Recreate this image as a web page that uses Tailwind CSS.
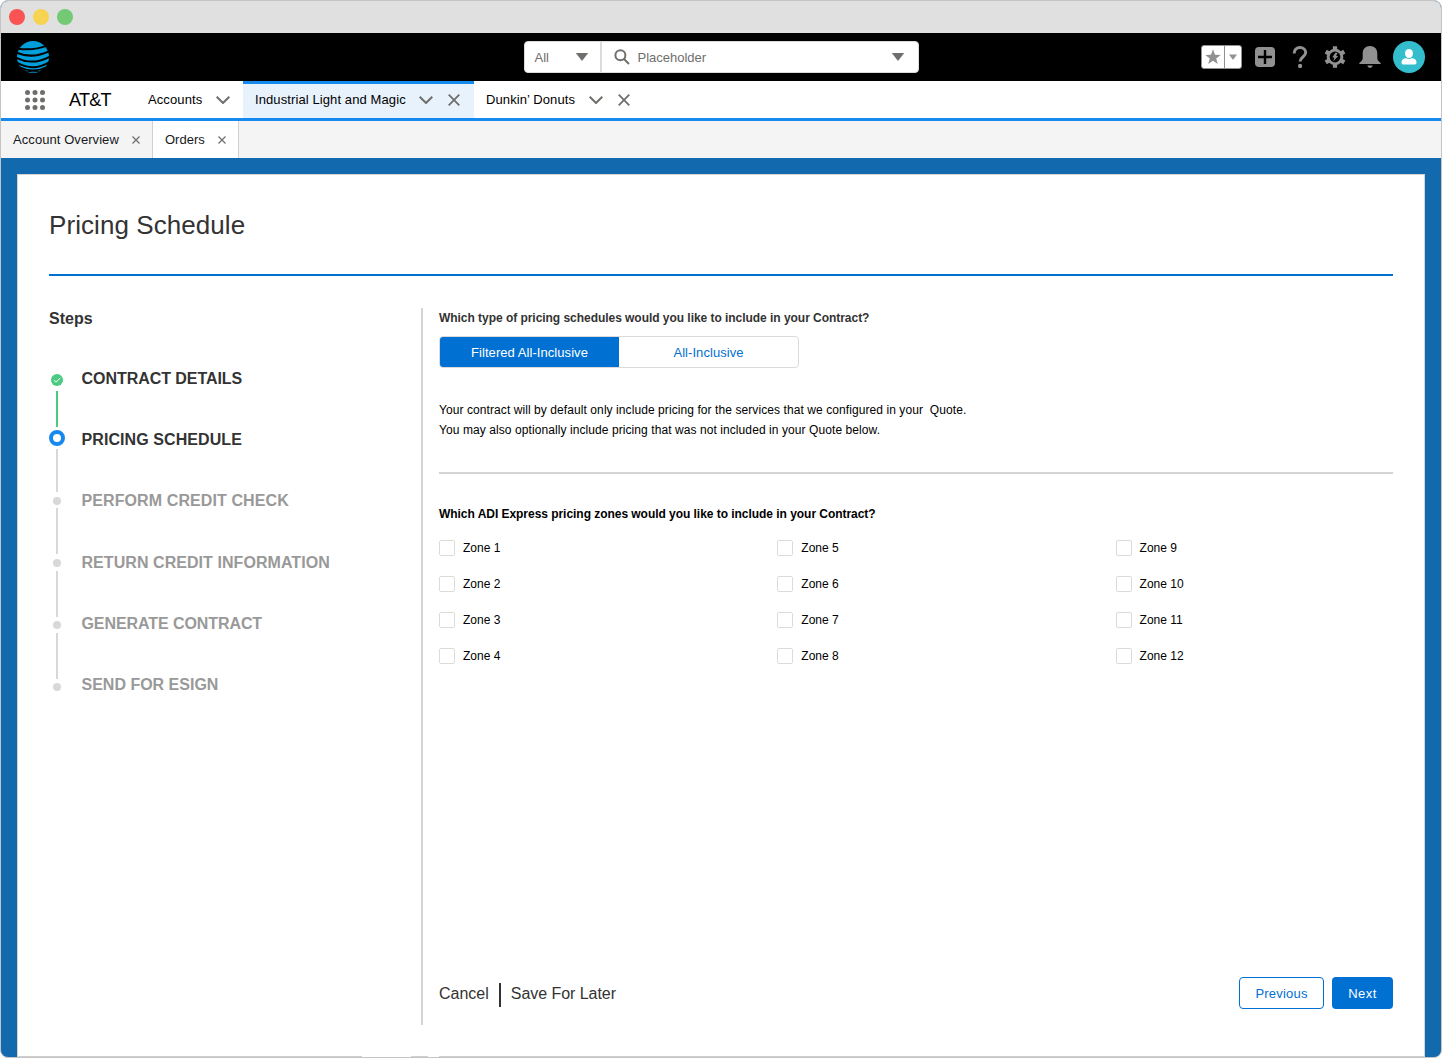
<!DOCTYPE html>
<html lang="en">
<head>
    <meta charset="UTF-8">
    <meta name="viewport" content="width=device-width, initial-scale=1.0">
    <title>Pricing Schedule</title>
    <script src="https://cdn.jsdelivr.net/npm/@tailwindcss/browser@4"></script>
    <style>
        body {
            font-family: 'Liberation Sans', Arial, sans-serif;
        }
    </style>
</head>
<body class="bg-white">
    <div class="flex h-[1058px] w-[1442px] flex-col overflow-hidden rounded-lg border border-[#c4c4c4] bg-[#1269ae] text-[13px] text-[#16181c]">
        <!-- Window title bar -->
        <div class="flex h-8 shrink-0 items-center gap-2 bg-[#e0e0e0] pl-2">
            <span class="size-4 rounded-full bg-[#f95353]"></span>
            <span class="size-4 rounded-full bg-[#f6d351]"></span>
            <span class="size-4 rounded-full bg-[#73c974]"></span>
        </div>

        <!-- Global header -->
        <header class="grid h-12 shrink-0 grid-cols-[1fr_395px_1fr] items-center bg-black px-4">
            <svg class="size-8" viewBox="0 0 96 96">
                <circle cx="48" cy="48" r="48" fill="#009fdb"/>
                <g fill="none" stroke="#000" stroke-width="6">
                    <path d="M4 23Q48 30 92 13"/>
                    <path d="M-4 34Q44 56 100 29"/>
                    <path d="M-4 49Q46 76 100 46"/>
                    <path d="M-2 64Q48 94 98 63"/>
                    <path d="M4 77Q48 99 92 77" stroke-width="5"/>
                    <path d="M14 87Q48 98 82 87" stroke-width="3"/>
                </g>
            </svg>
            <div class="flex h-8 items-center rounded border border-[#dddbda] bg-white text-[#706e6b]">
                <div class="flex h-full w-[77px] items-center justify-between border-r-2 border-[#dddbda] pr-3 pl-[10px]">
                    <span class="pt-px">All</span>
                    <svg class="h-2 w-3" viewBox="0 0 12 8" fill="currentColor"><path d="M.5 0h11q.5 0 .3.5L6.4 7.6q-.4.5-.8 0L.2.5Q0 0 .5 0z"/></svg>
                </div>
                <svg class="ml-3 size-4" viewBox="0 0 16 16" fill="none" stroke="currentColor" stroke-width="2"><circle cx="6.400" cy="6.300" r="5"/><path d="M10 10l5 5"/></svg>
                <span class="ml-2 flex-1 pt-px">Placeholder</span>
                <svg class="mr-[14px] h-2 w-3" viewBox="0 0 12 8" fill="currentColor"><path d="M.5 0h11q.5 0 .3.5L6.4 7.6q-.4.5-.8 0L.2.5Q0 0 .5 0z"/></svg>
            </div>
            <div class="flex items-center justify-end text-[#919191]">
                <div class="mr-[13px] flex h-6 w-[41px] items-center rounded-[3px] border border-[#919191] bg-white">
                    <svg class="ml-[3px] size-4" viewBox="0 0 16 16" fill="currentColor"><path d="M8 .3l2 5.400 5.700.2-4.500 3.500 1.600 5.600L8 11.800l-4.800 3.200 1.600-5.600L.3 5.900 6 5.700z"/></svg>
                    <span class="ml-[3px] h-full w-px bg-[#919191]"></span>
                    <svg class="ml-1 h-[6px] w-2" viewBox="0 0 8 6" fill="currentColor"><path d="M0 .4h8L4.500 5.300q-.5.6-1 0z"/></svg>
                </div>
                <svg class="mr-[17px] size-5" viewBox="0 0 20 20"><rect width="20" height="20" rx="4" fill="currentColor"/><path d="M10 3v14M3 10h14" stroke="#000" stroke-width="2.400"/></svg>
                <svg class="mr-4 h-[22px] w-4" viewBox="0 0 16 22" fill="none"><path d="M2.200 7.500C2 3.800 4.700 1.600 8 1.600s5.700 2.100 5.700 5c0 4.700-5.600 4.200-5.600 8.900" stroke="currentColor" stroke-width="3"/><rect x="6.200" y="18" width="3.800" height="4" rx="1.200" fill="currentColor"/></svg>
                <svg class="mr-[13px] size-[22px]" viewBox="0 0 22 22">
                    <g stroke="currentColor" stroke-width="4.200">
                        <path d="M11 .2v21.600M1.700 5.600l18.600 10.800M20.300 5.600L1.700 16.400"/>
                    </g>
                    <circle cx="11" cy="11" r="8.300" fill="currentColor"/>
                    <circle cx="11" cy="11" r="5.400" fill="#000"/>
                    <path d="M11.300 6.800h2.200l-1.300 3.200h2l-4.900 5.200 1.100-3.800H8.300z" fill="currentColor"/>
                </svg>
                <svg class="mr-3 size-[22px]" viewBox="0 0 22 22" fill="currentColor"><path d="M11 0C6.600 0 3.700 3 3.700 7.300v4.200c0 2.200-.6 3.300-2.200 4.400C-.2 17 .1 18 .8 18h20.400c.7 0 1-1-.7-2.100-1.600-1.100-2.200-2.200-2.200-4.400V7.300C18.300 3 15.400 0 11 0zM8.200 19.600h5.600Q13 22 11 22t-2.800-2.400z"/></svg>
                <span class="flex size-8 items-center justify-center rounded-full bg-[#34becd]">
                    <svg class="size-4" viewBox="0 0 16 16" fill="#fff"><ellipse cx="8" cy="4.500" rx="4" ry="4.500"/><path d="M1.800 10.200q1.700-1 3.600-.9 2.600 1.400 5.200 0 1.900-.1 3.600.9 1.300 1 1.300 3.500 0 1.800-1.700 1.800H2.200Q.5 15.500.5 13.700q0-2.500 1.300-3.500z"/></svg>
                </span>
            </div>
        </header>

        <!-- App navigation -->
        <nav class="flex h-10 shrink-0 border-b-3 border-[#1589ee] bg-white text-black">
            <div class="flex w-[242px] items-center">
                <svg class="ml-6 size-5" viewBox="0 0 20 20" fill="#706e6b"><circle cx="2.500" cy="2.500" r="2.500"/><circle cx="10" cy="2.500" r="2.500"/><circle cx="17.500" cy="2.500" r="2.500"/><circle cx="2.500" cy="10" r="2.500"/><circle cx="10" cy="10" r="2.500"/><circle cx="17.500" cy="10" r="2.500"/><circle cx="2.500" cy="17.500" r="2.500"/><circle cx="10" cy="17.500" r="2.500"/><circle cx="17.500" cy="17.500" r="2.500"/></svg>
                <span class="ml-6 w-[79px] pt-px text-[18px] tracking-[-0.700px]">AT&amp;T</span>
                <span class="pt-px tracking-[0.100px]">Accounts</span>
                <svg class="mr-[13px] ml-auto h-2 w-[14px]" viewBox="0 0 14 8" fill="none" stroke="#706e6b" stroke-width="2"><path d="M.7.7L7 7 13.300.7"/></svg>
            </div>
            <div class="flex w-[231px] items-center border-t-3 border-[#1589ee] bg-[#e8f2fd] pb-[3px] pl-3">
                <span class="pt-px tracking-[0.100px]">Industrial Light and Magic</span>
                <svg class="mr-[15px] ml-auto h-2 w-[14px]" viewBox="0 0 14 8" fill="none" stroke="#706e6b" stroke-width="2"><path d="M.7.7L7 7 13.300.7"/></svg>
                <svg class="mr-[14px] size-3" viewBox="0 0 12 12" stroke="#706e6b" stroke-width="1.800"><path d="M.7.7l10.600 10.600M11.300.7L.7 11.300"/></svg>
            </div>
            <div class="flex w-[170px] items-center pl-3">
                <span class="pt-px tracking-[0.100px]">Dunkin’ Donuts</span>
                <svg class="mr-[15px] ml-auto h-2 w-[14px]" viewBox="0 0 14 8" fill="none" stroke="#706e6b" stroke-width="2"><path d="M.7.7L7 7 13.300.7"/></svg>
                <svg class="mr-[14px] size-3" viewBox="0 0 12 12" stroke="#706e6b" stroke-width="1.800"><path d="M.7.7l10.600 10.600M11.300.7L.7 11.300"/></svg>
            </div>
        </nav>

        <!-- Sub tabs -->
        <div class="flex h-[37px] shrink-0 bg-[#f4f4f4]">
            <div class="flex w-[152px] items-center justify-between border-r border-[#d0d0d0] px-3">
                <span class="pt-px tracking-[0.070px]">Account Overview</span>
                <svg class="size-2" viewBox="0 0 8 8" stroke="#706e6b" stroke-width="1.200"><path d="M.5.5l7 7M7.500.5l-7 7"/></svg>
            </div>
            <div class="flex w-[86px] items-center justify-between border-r border-[#d0d0d0] bg-white px-3">
                <span class="pt-px">Orders</span>
                <svg class="size-2" viewBox="0 0 8 8" stroke="#706e6b" stroke-width="1.200"><path d="M.5.5l7 7M7.500.5l-7 7"/></svg>
            </div>
        </div>

        <!-- Page card -->
        <main class="mx-4 mt-4 flex flex-1 flex-col border border-b-0 border-[#d4d4d4] bg-white px-[31px]">
            <div class="h-[101px] border-b-2 border-[#0070d2] pt-[34px]">
                <h1 class="text-[26px] leading-8 tracking-[0.070px] text-[#333]">Pricing Schedule</h1>
            </div>
            <div class="mt-8 flex h-[717px]">
                <aside class="w-[374px] shrink-0 border-r-2 border-[#d4d4d4] font-bold text-[#333]">
                    <h2 class="mb-[19px] pt-px text-[16px] leading-5">Steps</h2>
                    <div class="flex">
                        <div class="flex w-4 flex-col items-center pt-[26px]">
                            <svg class="size-3" viewBox="0 0 12 12"><circle cx="6" cy="6" r="6" fill="#4bca81"/><path d="M2.800 6l2.200 2.200L9.300 4" fill="none" stroke="#fff"/></svg>
                            <span class="mt-[5px] h-9 w-[2px] bg-[#4bca81]"></span>
                            <span class="mt-[3px] size-4 rounded-full border-4 border-[#1589ee]"></span>
                            <span class="mt-[3px] h-[43px] w-[2px] bg-[#d8d8d8]"></span>
                            <span class="mt-[4.500px] size-2 rounded-full bg-[#d8d8d8]"></span>
                            <span class="mt-[3.500px] h-[46px] w-[2px] bg-[#d8d8d8]"></span>
                            <span class="mt-[4.500px] size-2 rounded-full bg-[#d8d8d8]"></span>
                            <span class="mt-[4px] h-[46px] w-[2px] bg-[#d8d8d8]"></span>
                            <span class="mt-[4px] size-2 rounded-full bg-[#d8d8d8]"></span>
                            <span class="mt-[4px] h-[46px] w-[2px] bg-[#d8d8d8]"></span>
                            <span class="mt-[4.500px] size-2 rounded-full bg-[#d8d8d8]"></span>
                        </div>
                        <ol class="ml-[16.500px] text-[16px] leading-[61.200px] whitespace-nowrap">
                            <li class="tracking-[-0.050px]">CONTRACT DETAILS</li>
                            <li class="tracking-[0.080px]">PRICING SCHEDULE</li>
                            <li class="tracking-[0.100px] text-[#999]">PERFORM CREDIT CHECK</li>
                            <li class="tracking-[0.060px] text-[#999]">RETURN CREDIT INFORMATION</li>
                            <li class="tracking-[-0.080px] text-[#999]">GENERATE CONTRACT</li>
                            <li class="text-[#999]">SEND FOR ESIGN</li>
                        </ol>
                    </div>
                </aside>

                <section class="ml-4 flex flex-1 flex-col text-[12px] leading-5 text-black">
                    <h3 class="font-bold tracking-[-0.040px] text-[#333]">Which type of pricing schedules would you like to include in your Contract?</h3>
                    <div class="mt-2 flex h-8 w-[360px] overflow-hidden rounded border border-[#dddbda] text-[13px] text-[#0070d2]">
                        <button class="w-[179px] bg-[#0070d2] pt-px tracking-[0.060px] text-white">Filtered All-Inclusive</button>
                        <button class="flex-1 pt-px tracking-[0.060px]">All-Inclusive</button>
                    </div>
                    <div class="mt-8 border-b-2 border-[#d4d4d4] pb-8 tracking-[0.080px]">
                        <p>Your contract will by default only include pricing for the services that we configured in your &nbsp;Quote.</p>
                        <p>You may also optionally include pricing that was not included in your Quote below.</p>
                    </div>
                    <h3 class="mt-[30px] font-bold tracking-[-0.040px]">Which ADI Express pricing zones would you like to include in your Contract?</h3>
                    <div class="mt-[14px] grid grid-flow-col grid-cols-[338.300px_338.300px_1fr] grid-rows-4 gap-y-4">
                        <label class="flex items-center gap-2"><span class="size-4 rounded-[2px] border border-[#dddbda]"></span>Zone 1</label>
                        <label class="flex items-center gap-2"><span class="size-4 rounded-[2px] border border-[#dddbda]"></span>Zone 2</label>
                        <label class="flex items-center gap-2"><span class="size-4 rounded-[2px] border border-[#dddbda]"></span>Zone 3</label>
                        <label class="flex items-center gap-2"><span class="size-4 rounded-[2px] border border-[#dddbda]"></span>Zone 4</label>
                        <label class="flex items-center gap-2"><span class="size-4 rounded-[2px] border border-[#dddbda]"></span>Zone 5</label>
                        <label class="flex items-center gap-2"><span class="size-4 rounded-[2px] border border-[#dddbda]"></span>Zone 6</label>
                        <label class="flex items-center gap-2"><span class="size-4 rounded-[2px] border border-[#dddbda]"></span>Zone 7</label>
                        <label class="flex items-center gap-2"><span class="size-4 rounded-[2px] border border-[#dddbda]"></span>Zone 8</label>
                        <label class="flex items-center gap-2"><span class="size-4 rounded-[2px] border border-[#dddbda]"></span>Zone 9</label>
                        <label class="flex items-center gap-2"><span class="size-4 rounded-[2px] border border-[#dddbda]"></span>Zone 10</label>
                        <label class="flex items-center gap-2"><span class="size-4 rounded-[2px] border border-[#dddbda]"></span>Zone 11</label>
                        <label class="flex items-center gap-2"><span class="size-4 rounded-[2px] border border-[#dddbda]"></span>Zone 12</label>
                    </div>
                    <div class="mt-auto mb-4 flex h-8 items-center text-[16px] text-[#333]">
                        <a class="pt-px">Cancel</a>
                        <span class="mt-1 mr-[10px] ml-[10px] h-6 w-[2px] bg-[#333]"></span>
                        <a class="pt-px tracking-[-0.050px]">Save For Later</a>
                        <div class="ml-auto flex gap-2 text-[13px]">
                            <button class="h-8 w-[85px] rounded border border-[#0070d2] pt-px tracking-[0.200px] text-[#0070d2]">Previous</button>
                            <button class="h-8 w-[61px] rounded bg-[#0070d2] pt-px tracking-[0.400px] text-white">Next</button>
                        </div>
                    </div>
                </section>
            </div>
            <!-- Bottom edge of the card, in three segments -->
            <div class="-mx-[31px] mt-auto flex h-px">
                <span class="w-[344px] bg-[#d0d0d0]"></span>
                <span class="ml-[49px] w-[17px] bg-[#d0d0d0]"></span>
                <span class="ml-[11px] flex-1 bg-[#d0d0d0]"></span>
            </div>
        </main>
    </div>
</body>
</html>
